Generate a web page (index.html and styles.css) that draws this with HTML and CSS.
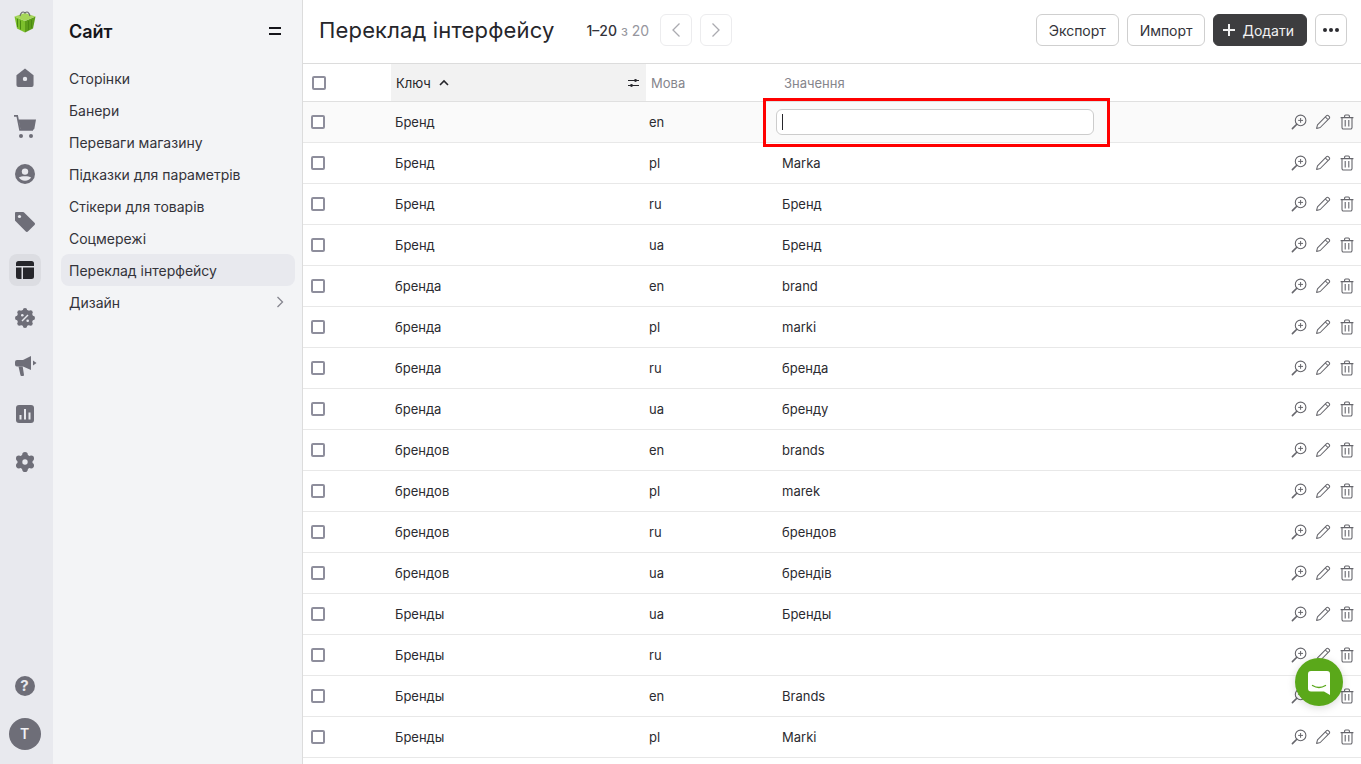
FILE: index.html
```html
<!DOCTYPE html>
<html lang="uk">
<head>
<meta charset="utf-8">
<title>Переклад інтерфейсу</title>
<link rel="stylesheet" href="styles.css">
</head>
<body>
<svg class="defs" width="0" height="0" aria-hidden="true">
  <symbol id="i-zoom" viewBox="0 0 16 16">
    <circle cx="9.6" cy="6.4" r="5.3" fill="none" stroke="currentColor" stroke-width="1.1"/>
    <path d="M9.6 4v4.8M7.2 6.4H12" fill="none" stroke="currentColor" stroke-width="1"/>
    <path d="M5.8 10.2 1.4 14.6" fill="none" stroke="currentColor" stroke-width="1.6" stroke-linecap="round"/>
  </symbol>
  <symbol id="i-edit" viewBox="0 0 16 16">
    <path d="M1.6 14.4 2.5 10.8 11.6 1.7a1.2 1.2 0 0 1 1.7 0l1 1a1.2 1.2 0 0 1 0 1.7L5.2 13.5ZM10.4 3l2.6 2.6" fill="none" stroke="currentColor" stroke-width="1.05" stroke-linejoin="round"/>
  </symbol>
  <symbol id="i-trash" viewBox="0 0 16 16">
    <path d="M3 4v9.6A1.4 1.4 0 0 0 4.4 15h7.2a1.4 1.4 0 0 0 1.4-1.4V4M1.6 3.6h12.8M5.6 3.4V2a1 1 0 0 1 1-1h2.8a1 1 0 0 1 1 1v1.4M6.2 6v6.4M9.8 6v6.4" fill="none" stroke="currentColor" stroke-width="1.1"/>
  </symbol>
</svg>
<div class="app">
  <nav class="rail">
    <div class="logo">
      <svg width="24" height="24" viewBox="0 0 24 24">
        <path d="M1.5 6.5 12 11v11.500L4 18.500Z" fill="#7cc02c"/>
        <path d="M22.500 6.500 12 11v11.500l8-4Z" fill="#5c9d1a"/>
        <path d="M1.500 6.500 12 3l10.500 3.500L12 11Z" fill="#a6d65a"/>
        <path d="M4.500 9v8M7.500 10.500v9M15.500 11v9M18.500 9.800v8" stroke="#4a8a12" stroke-width="1"/>
        <path d="M7 6c1-4 3-5 5-3 2-2 4-1 5 3" fill="none" stroke="#6d6f6d" stroke-width="1.200"/>
      </svg>
    </div>
    <ul class="rail-list">
      <li class="rail-item"><svg class="ico-home" viewBox="0 0 18 20"><path d="M0 7.500 9 .5l9 7V18a2 2 0 0 1-2 2H2a2 2 0 0 1-2-2Z" fill="currentColor"/><circle cx="9" cy="11.500" r="2.300" fill="#e8e9ee"/></svg></li>
      <li class="rail-item"><svg class="ico-cart" viewBox="0 0 22 23"><path d="M0 .9h3.200l2.800 14H19" fill="none" stroke="currentColor" stroke-width="1.700"/><path d="M4.400 4.500H22l-1.600 9a1.500 1.500 0 0 1-1.500 1.200H6.600Z" fill="currentColor"/><circle cx="7" cy="21" r="2" fill="currentColor"/><circle cx="17" cy="21" r="2" fill="currentColor"/></svg></li>
      <li class="rail-item"><svg class="ico-std" viewBox="0 0 20 20"><circle cx="10" cy="10" r="10" fill="currentColor"/><circle cx="10" cy="7.600" r="3.200" fill="#e8e9ee"/><path d="M3.900 13.600c2.200-1.700 10-1.700 12.200 0C15 15.600 12.800 16.800 10 16.800S5 15.600 3.900 13.600Z" fill="#e8e9ee"/></svg></li>
      <li class="rail-item"><svg class="ico-std" viewBox="0 0 20 20"><path d="M1 0h7a1.500 1.500 0 0 1 1.100.4l10.400 10.400a1.500 1.500 0 0 1 0 2.100l-6.600 6.600a1.500 1.500 0 0 1-2.100 0L.4 9.100A1.500 1.500 0 0 1 0 8V1a1 1 0 0 1 1-1Z" fill="currentColor"/><circle cx="4.500" cy="4.500" r="1.600" fill="#e8e9ee"/></svg></li>
      <li class="rail-item is-active"><svg class="ico-sq" viewBox="0 0 18 18"><path d="M2.500 0h13A2.500 2.500 0 0 1 18 2.500V5H0V2.500A2.500 2.500 0 0 1 2.500 0ZM0 6.500h5.500V18h-3A2.500 2.500 0 0 1 0 15.500ZM7 6.500h11v9a2.500 2.500 0 0 1-2.500 2.500H7Z" fill="#26262b"/></svg></li>
      <li class="rail-item"><svg class="ico-std" viewBox="0 0 20 20"><g fill="currentColor"><circle cx="10" cy="10" r="8.200"/><circle cx="10" cy="2.200" r="2.200"/><circle cx="15.500" cy="4.500" r="2.200"/><circle cx="17.800" cy="10" r="2.200"/><circle cx="15.500" cy="15.500" r="2.200"/><circle cx="10" cy="17.800" r="2.200"/><circle cx="4.500" cy="15.500" r="2.200"/><circle cx="2.200" cy="10" r="2.200"/><circle cx="4.500" cy="4.500" r="2.200"/></g><path d="M7 13l6-6" stroke="#e8e9ee" stroke-width="1.500"/><circle cx="7.300" cy="7.300" r="1.300" fill="#e8e9ee"/><circle cx="12.700" cy="12.700" r="1.300" fill="#e8e9ee"/></svg></li>
      <li class="rail-item"><svg class="ico-mega" viewBox="0 0 22 20"><path d="M2 4h6l8-4v14L8 10.500H2a2 2 0 0 1-2-2V6a2 2 0 0 1 2-2Z" fill="currentColor"/><path d="M3.500 10.500h4.200L9 19a1 1 0 0 1-1 1H6.500a1 1 0 0 1-1-.8Z" fill="currentColor"/><path d="M18 4.500 21.500 7 18 9.500Z" fill="currentColor"/></svg></li>
      <li class="rail-item"><svg class="ico-sq" viewBox="0 0 18 18"><rect width="18" height="18" rx="3" fill="currentColor"/><path d="M4.500 10v4.500M9 4v10.500M13.500 7.500v7" stroke="#e8e9ee" stroke-width="2"/></svg></li>
      <li class="rail-item"><svg class="ico-gear" viewBox="0 0 20 20"><g fill="currentColor"><circle cx="10" cy="10" r="7.600"/><circle cx="10" cy="2.800" r="2.800"/><circle cx="16.200" cy="6.400" r="2.800"/><circle cx="16.200" cy="13.600" r="2.800"/><circle cx="10" cy="17.200" r="2.800"/><circle cx="3.800" cy="13.600" r="2.800"/><circle cx="3.800" cy="6.400" r="2.800"/></g><circle cx="10" cy="10" r="2.700" fill="#e8e9ee"/></svg></li>
    </ul>
    <div class="rail-bottom">
      <div class="help">?</div>
      <div class="avatar">Т</div>
    </div>
  </nav>

  <aside class="side">
    <div class="side-head">
      <span class="side-title">Сайт</span>
      <span class="side-toggle"></span>
    </div>
    <ul class="side-list">
      <li class="side-item">Сторінки</li>
      <li class="side-item">Банери</li>
      <li class="side-item">Переваги магазину</li>
      <li class="side-item">Підказки для параметрів</li>
      <li class="side-item">Стікери для товарів</li>
      <li class="side-item">Соцмережі</li>
      <li class="side-item is-active">Переклад інтерфейсу</li>
      <li class="side-item">Дизайн
        <svg class="side-chev" width="8" height="12" viewBox="0 0 8 12"><path d="M1.500 1 6.500 6l-5 5" fill="none" stroke="currentColor" stroke-width="1.300"/></svg>
      </li>
    </ul>
  </aside>

  <main class="main">
    <header class="top">
      <h1 class="title">Переклад інтерфейсу</h1>
      <div class="pager"><b>1–20</b> <span>з 20</span></div>
      <div class="pager-btns">
        <button class="pg"><svg width="10" height="16" viewBox="0 0 10 16"><path d="M8.500 1.500 2 8l6.500 6.500" fill="none" stroke="currentColor" stroke-width="1.300"/></svg></button>
        <button class="pg"><svg width="10" height="16" viewBox="0 0 10 16"><path d="M1.500 1.500 8 8l-6.500 6.500" fill="none" stroke="currentColor" stroke-width="1.300"/></svg></button>
      </div>
      <div class="actions">
        <button class="btn">Экспорт</button>
        <button class="btn">Импорт</button>
        <button class="btn btn-dark"><svg width="14" height="14" viewBox="0 0 14 14"><path d="M7 1v12M1 7h12" stroke="currentColor" stroke-width="2"/></svg>Додати</button>
        <button class="btn btn-more"><i></i><i></i><i></i></button>
      </div>
    </header>

    <div class="table">
      <div class="thead">
        <div class="c-check"><span class="cb cb-h"></span></div>
        <div class="c-key th-key">
          <span>Ключ</span>
          <svg class="sort" width="10" height="7" viewBox="0 0 10 7"><path d="M1 6 5 2l4 4" fill="none" stroke="currentColor" stroke-width="1.600"/></svg>
          <svg class="filter" width="11" height="10" viewBox="0 0 11 10"><path d="M0 2.500h11M0 7.500h11" stroke="currentColor" stroke-width="1"/><circle cx="7.500" cy="2.500" r="1.400" fill="currentColor"/><circle cx="3.500" cy="7.500" r="1.400" fill="currentColor"/></svg>
        </div>
        <div class="c-lang th">Мова</div>
        <div class="c-val th">Значення</div>
      </div>

      <div class="row is-editing">
        <div class="c-check"><span class="cb"></span></div>
        <div class="c-key">Бренд</div>
        <div class="c-lang">en</div>
        <div class="c-val"><div class="edit"><span class="caret"></span></div></div>
        <div class="c-act"><svg><use href="#i-zoom"/></svg><svg><use href="#i-edit"/></svg><svg><use href="#i-trash"/></svg></div>
      </div>
      <div class="row"><div class="c-check"><span class="cb"></span></div><div class="c-key">Бренд</div><div class="c-lang">pl</div><div class="c-val">Marka</div><div class="c-act"><svg><use href="#i-zoom"/></svg><svg><use href="#i-edit"/></svg><svg><use href="#i-trash"/></svg></div></div>
      <div class="row"><div class="c-check"><span class="cb"></span></div><div class="c-key">Бренд</div><div class="c-lang">ru</div><div class="c-val">Бренд</div><div class="c-act"><svg><use href="#i-zoom"/></svg><svg><use href="#i-edit"/></svg><svg><use href="#i-trash"/></svg></div></div>
      <div class="row"><div class="c-check"><span class="cb"></span></div><div class="c-key">Бренд</div><div class="c-lang">ua</div><div class="c-val">Бренд</div><div class="c-act"><svg><use href="#i-zoom"/></svg><svg><use href="#i-edit"/></svg><svg><use href="#i-trash"/></svg></div></div>
      <div class="row"><div class="c-check"><span class="cb"></span></div><div class="c-key">бренда</div><div class="c-lang">en</div><div class="c-val">brand</div><div class="c-act"><svg><use href="#i-zoom"/></svg><svg><use href="#i-edit"/></svg><svg><use href="#i-trash"/></svg></div></div>
      <div class="row"><div class="c-check"><span class="cb"></span></div><div class="c-key">бренда</div><div class="c-lang">pl</div><div class="c-val">marki</div><div class="c-act"><svg><use href="#i-zoom"/></svg><svg><use href="#i-edit"/></svg><svg><use href="#i-trash"/></svg></div></div>
      <div class="row"><div class="c-check"><span class="cb"></span></div><div class="c-key">бренда</div><div class="c-lang">ru</div><div class="c-val">бренда</div><div class="c-act"><svg><use href="#i-zoom"/></svg><svg><use href="#i-edit"/></svg><svg><use href="#i-trash"/></svg></div></div>
      <div class="row"><div class="c-check"><span class="cb"></span></div><div class="c-key">бренда</div><div class="c-lang">ua</div><div class="c-val">бренду</div><div class="c-act"><svg><use href="#i-zoom"/></svg><svg><use href="#i-edit"/></svg><svg><use href="#i-trash"/></svg></div></div>
      <div class="row"><div class="c-check"><span class="cb"></span></div><div class="c-key">брендов</div><div class="c-lang">en</div><div class="c-val">brands</div><div class="c-act"><svg><use href="#i-zoom"/></svg><svg><use href="#i-edit"/></svg><svg><use href="#i-trash"/></svg></div></div>
      <div class="row"><div class="c-check"><span class="cb"></span></div><div class="c-key">брендов</div><div class="c-lang">pl</div><div class="c-val">marek</div><div class="c-act"><svg><use href="#i-zoom"/></svg><svg><use href="#i-edit"/></svg><svg><use href="#i-trash"/></svg></div></div>
      <div class="row"><div class="c-check"><span class="cb"></span></div><div class="c-key">брендов</div><div class="c-lang">ru</div><div class="c-val">брендов</div><div class="c-act"><svg><use href="#i-zoom"/></svg><svg><use href="#i-edit"/></svg><svg><use href="#i-trash"/></svg></div></div>
      <div class="row"><div class="c-check"><span class="cb"></span></div><div class="c-key">брендов</div><div class="c-lang">ua</div><div class="c-val">брендів</div><div class="c-act"><svg><use href="#i-zoom"/></svg><svg><use href="#i-edit"/></svg><svg><use href="#i-trash"/></svg></div></div>
      <div class="row"><div class="c-check"><span class="cb"></span></div><div class="c-key">Бренды</div><div class="c-lang">ua</div><div class="c-val">Бренды</div><div class="c-act"><svg><use href="#i-zoom"/></svg><svg><use href="#i-edit"/></svg><svg><use href="#i-trash"/></svg></div></div>
      <div class="row"><div class="c-check"><span class="cb"></span></div><div class="c-key">Бренды</div><div class="c-lang">ru</div><div class="c-val"></div><div class="c-act"><svg><use href="#i-zoom"/></svg><svg><use href="#i-edit"/></svg><svg><use href="#i-trash"/></svg></div></div>
      <div class="row"><div class="c-check"><span class="cb"></span></div><div class="c-key">Бренды</div><div class="c-lang">en</div><div class="c-val">Brands</div><div class="c-act"><svg><use href="#i-zoom"/></svg><svg><use href="#i-edit"/></svg><svg><use href="#i-trash"/></svg></div></div>
      <div class="row"><div class="c-check"><span class="cb"></span></div><div class="c-key">Бренды</div><div class="c-lang">pl</div><div class="c-val">Marki</div><div class="c-act"><svg><use href="#i-zoom"/></svg><svg><use href="#i-edit"/></svg><svg><use href="#i-trash"/></svg></div></div>
    </div>
  </main>
</div>

<div class="highlight"></div>
<div class="chat">
  <svg width="22" height="24" viewBox="0 0 22 24"><path d="M3 0h16a3 3 0 0 1 3 3v21l-6-3.500H3a3 3 0 0 1-3-3V3a3 3 0 0 1 3-3Z" fill="#fff"/><path d="M4.500 14.500c4 2.500 9 2.500 13 0" fill="none" stroke="#5aa81a" stroke-width="1.400" stroke-linecap="round"/></svg>
</div>
</body>
</html>
```

FILE: styles.css
```css
* { box-sizing: border-box; }
html, body { margin: 0; height: 100%; overflow: hidden; }
body { font-family: Inter, "Noto Sans", sans-serif; font-size: 13px; color: #2b2b30; background: #fff; }
ul { list-style: none; margin: 0; padding: 0; }
button { font: inherit; cursor: pointer; }
.defs { position: absolute; }

.app { display: flex; height: 764px; }

/* icon rail */
.rail { width: 53px; flex: none; background: #e8e9ee; display: flex; flex-direction: column; align-items: center; padding-right: 4px; }
.logo { height: 48px; padding-top: 10px; display: flex; justify-content: center; }
.rail-list { display: flex; flex-direction: column; gap: 16px; margin-top: 14px; }
.rail-item { width: 32px; height: 32px; border-radius: 8px; display: flex; align-items: center; justify-content: center; color: #6e6e78; }
.rail-item.is-active { background: #dcdde2; }
.ico-std { width: 20px; height: 20px; }
.ico-home { width: 18px; height: 19px; margin-bottom: 1px; }
.ico-cart { width: 22px; height: 23px; }
.ico-sq { width: 18px; height: 18px; }
.ico-mega { width: 22px; height: 20px; margin-left: 2px; }
.ico-gear { width: 20px; height: 20px; }
.rail-bottom { margin-top: auto; display: flex; flex-direction: column; align-items: center; gap: 22px; padding-bottom: 14px; }
.help { width: 20px; height: 20px; border-radius: 50%; background: #6e6e78; color: #e8e9ee; font-weight: 700; font-size: 15px; line-height: 20px; text-align: center; }
.avatar { width: 32px; height: 32px; border-radius: 50%; background: #6e6e78; color: #f1f1f4; font-weight: 600; font-size: 14px; line-height: 32px; text-align: center; }

/* section sidebar */
.side { width: 250px; flex: none; background: #f3f4f6; border-right: 1px solid #dcdcdc; padding: 0 7px 0 8px; }
.side-head { height: 62px; display: flex; align-items: center; justify-content: space-between; padding: 0 8px; }
.side-title { font-size: 18px; font-weight: 600; color: #15151a; }
.side-toggle { width: 12px; height: 8px; border-top: 2px solid #15151a; border-bottom: 2px solid #15151a; margin-right: 6px; }
.side-item { height: 32px; border-radius: 8px; padding: 0 8px; display: flex; align-items: center; justify-content: space-between; font-size: 14px; color: #33333a; }
.side-item.is-active { background: #e8e9ee; }
.side-chev { color: #85858f; margin-right: 3px; }

/* main */
.main { flex: 1; min-width: 0; display: flex; flex-direction: column; }
.top { height: 64px; flex: none; border-bottom: 1px solid #dcdcdc; display: flex; align-items: center; padding: 0 14px 3px 16px; }
.title { margin: 0; font-size: 22px; font-weight: 400; letter-spacing: .16px; color: #26262b; line-height: 32px; }
.pager { margin-left: 32px; font-size: 14px; color: #96969e; }
.pager b { font-weight: 500; color: #33333a; }
.pager-btns { display: flex; gap: 8px; margin-left: 11px; }
.pg { width: 32px; height: 32px; padding: 0; border: 1px solid #ececee; border-radius: 6px; background: #fff; color: #aaaab0; display: flex; align-items: center; justify-content: center; }
.actions { margin-left: auto; display: flex; gap: 8px; }
.btn { height: 32px; padding: 0 12px; border: 1px solid #cfcfcf; border-radius: 6px; background: #fff; color: #33333a; font-size: 14px; letter-spacing: -.05px; display: flex; align-items: center; }
.btn-dark { background: #3d3d3f; border-color: #3d3d3f; color: #f2f2f2; padding: 0 12px 0 8px; gap: 6px; letter-spacing: 0; }
.btn-more { width: 32px; padding: 0; justify-content: center; gap: 2px; }
.btn-more i { width: 4px; height: 4px; border-radius: 50%; background: #2b2b30; }

/* table */
.table { flex: 1; }
.thead, .row { display: grid; grid-template-columns: 88px 255px 130px 1fr 90px; align-items: center; }
.thead { height: 38px; border-bottom: 1px solid #e0e0e0; grid-template-columns: 88px 255px 133px 1fr; }
.thead .c-check { padding-left: 9px; }
.row { height: 41px; border-bottom: 1px solid #e8e8e8; }
.row.is-editing { background: #fafafa; }
.c-check { padding-left: 8px; display: flex; align-items: center; }
.cb { width: 14px; height: 14px; border: 2px solid #8e8e9c; border-radius: 2px; background: #fff; }
.c-key { padding-left: 4px; }
.c-lang { padding-left: 3px; }
.c-val { padding-left: 6px; }
.th { color: #85858c; }
.thead .c-lang { padding-left: 5px; }
.thead .c-val { padding-left: 5px; }
.th-key { height: 37px; background: #f2f2f2; color: #26262b; display: flex; align-items: center; padding: 0 7px 0 5px; }
.sort { margin-left: 8px; color: #26262b; }
.filter { margin-left: auto; color: #26262b; }
.edit { width: 318px; height: 26px; margin-left: -6px; background: #fff; border: 1px solid #cccccc; border-radius: 6px; display: flex; align-items: center; padding-left: 5px; }
.caret { width: 1px; height: 16px; background: #26262b; }
.c-act { display: flex; justify-content: flex-end; align-items: center; gap: 8px; padding-right: 6px; color: #66666c; }
.c-act svg { width: 16px; height: 16px; }

/* overlays */
.highlight { position: absolute; left: 763px; top: 98px; width: 347px; height: 49px; border: 3px solid #ff0000; pointer-events: none; }
.chat { position: absolute; left: 1295px; top: 658px; width: 48px; height: 48px; border-radius: 50%; background: #5aa81a; box-shadow: 0 2px 8px rgba(0,0,0,.15); display: flex; align-items: center; justify-content: center; padding-top: 1px; }
```
